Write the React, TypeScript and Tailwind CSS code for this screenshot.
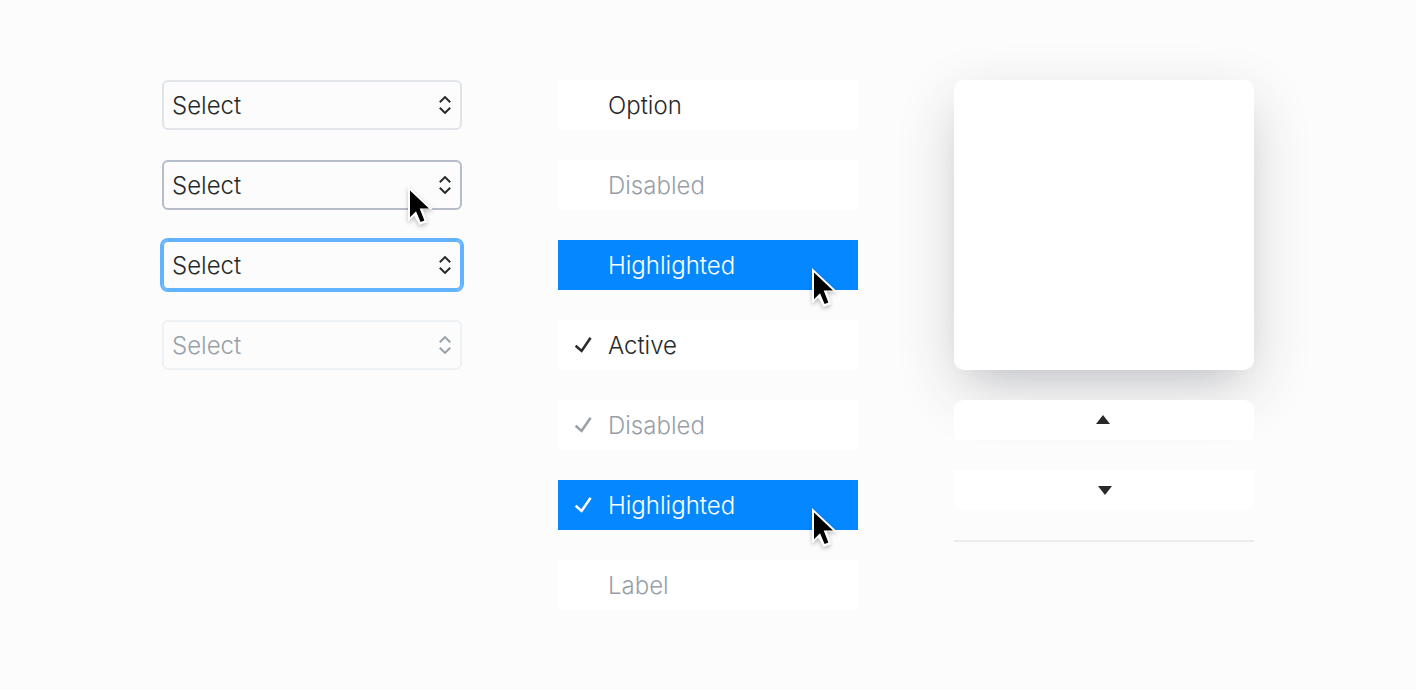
import React from "react";

type SelectState = "default" | "hover" | "focus" | "disabled";

const selectStyles: Record<SelectState, string> = {
  default: "border-[#e1e5ea] text-[#27292b]",
  hover: "border-[#b6bdc8] text-[#27292b]",
  focus: "border-[#62b3ff] ring-2 ring-[#62b3ff] text-[#27292b]",
  disabled: "border-[#eff2f5] text-[#98a0a8]",
};

function Pointer({ className }: { className: string }) {
  return (
    <svg
      className={`pointer-events-none absolute z-10 drop-shadow-[0_2px_2px_rgba(0,0,0,0.25)] ${className}`}
      width="28"
      height="42"
      viewBox="0 0 28 42"
      aria-hidden="true"
    >
      <path
        d="M0 0v35.5l6.3-5.8 5.2 9.3 7.6-3-4.3-12.6H25z"
        fill="#fff"
      />
      <path d="M2 4.5v26.8l6-6 4.6 10.8 3.8-1.5-4.7-12.2H21z" fill="#000" />
    </svg>
  );
}

function SelectField({ state }: { state: SelectState }) {
  const disabled = state === "disabled";
  return (
    <div className="relative">
      <select
        aria-label={`Select, ${state}`}
        disabled={disabled}
        className={`block h-[50px] w-full appearance-none rounded-md border-2 bg-transparent px-2 pt-0.5 text-2xl leading-none font-[350] opacity-100 outline-none ${selectStyles[state]}`}
      >
        <option>Select</option>
      </select>
      <svg
        className={`pointer-events-none absolute top-4 right-2 ${disabled ? "text-[#98a0a8]" : "text-[#27292b]"}`}
        width="18"
        height="18"
        viewBox="0 0 18 18"
        fill="none"
        stroke="currentColor"
        strokeWidth="2"
        aria-hidden="true"
      >
        <path d="M3.8 6.3 9 1.1l5.2 5.2M3.8 11.7 9 16.9l5.2-5.2" />
      </svg>
      {state === "hover" && <Pointer className="top-[26px] left-[246px]" />}
    </div>
  );
}

type Tone = "normal" | "muted" | "highlighted";

const toneStyles: Record<Tone, string> = {
  normal: "bg-white text-[#27292b]",
  muted: "bg-white text-[#98a0a8]",
  highlighted: "bg-[#0588ff] text-white",
};

const items: { label: string; tone: Tone; checked?: boolean; disabled?: boolean }[] = [
  { label: "Option", tone: "normal" },
  { label: "Disabled", tone: "muted", disabled: true },
  { label: "Highlighted", tone: "highlighted" },
  { label: "Active", tone: "normal", checked: true },
  { label: "Disabled", tone: "muted", checked: true, disabled: true },
  { label: "Highlighted", tone: "highlighted", checked: true },
  { label: "Label", tone: "muted", disabled: true },
];

function CheckMark() {
  return (
    <svg
      width="18"
      height="18"
      viewBox="0 0 18 18"
      fill="none"
      stroke="currentColor"
      strokeWidth="2.5"
      aria-hidden="true"
    >
      <path d="M1.6 8.8 7.6 14 16.6 0.8" />
    </svg>
  );
}

export default function App() {
  return (
    <main className="flex min-h-screen justify-center bg-[#fcfcfc] px-8 py-20 font-['Inter',sans-serif] text-2xl leading-none font-[350]">
      <div className="grid w-full max-w-[1092px] grid-cols-3 items-start gap-24">
        <section aria-label="Select states" className="flex flex-col gap-[30px]">
          <SelectField state="default" />
          <SelectField state="hover" />
          <SelectField state="focus" />
          <SelectField state="disabled" />
        </section>

        <ul role="listbox" aria-label="Option states" className="flex flex-col gap-[30px]">
          {items.map((item, index) => (
            <li
              key={index}
              role="option"
              aria-selected={!!item.checked}
              aria-disabled={!!item.disabled}
              className={`relative flex h-[50px] items-center pt-0.5 pl-4 ${toneStyles[item.tone]}`}
            >
              <span className="w-[34px]">{item.checked && <CheckMark />}</span>
              <span>{item.label}</span>
              {item.tone === "highlighted" && <Pointer className="top-7 left-[254px]" />}
            </li>
          ))}
        </ul>

        <section aria-label="Menu parts" className="flex flex-col gap-[30px]">
          <div className="h-[290px] rounded-[10px] bg-white shadow-[0_20px_60px_-5px_rgba(39,41,53,0.24),0_15px_30px_-20px_rgba(39,41,63,0.12)]" />
          <button
            type="button"
            aria-label="Scroll up"
            className="relative flex h-10 items-center justify-center rounded-t-[10px] bg-white pr-0.5 text-[#27292b]"
          >
            <svg width="14" height="10" viewBox="0 0 14 10" fill="currentColor" aria-hidden="true">
              <path d="M7 0l7 9H0z" />
            </svg>
          </button>
          <button
            type="button"
            aria-label="Scroll down"
            className="relative flex h-10 items-center justify-center rounded-b-[10px] bg-white pl-0.5 text-[#27292b]"
          >
            <svg width="14" height="10" viewBox="0 0 14 10" fill="currentColor" aria-hidden="true">
              <path d="M0 1h14l-7 9z" />
            </svg>
          </button>
          <hr className="border-t-2 border-[#e9ecef]" />
        </section>
      </div>
    </main>
  );
}
